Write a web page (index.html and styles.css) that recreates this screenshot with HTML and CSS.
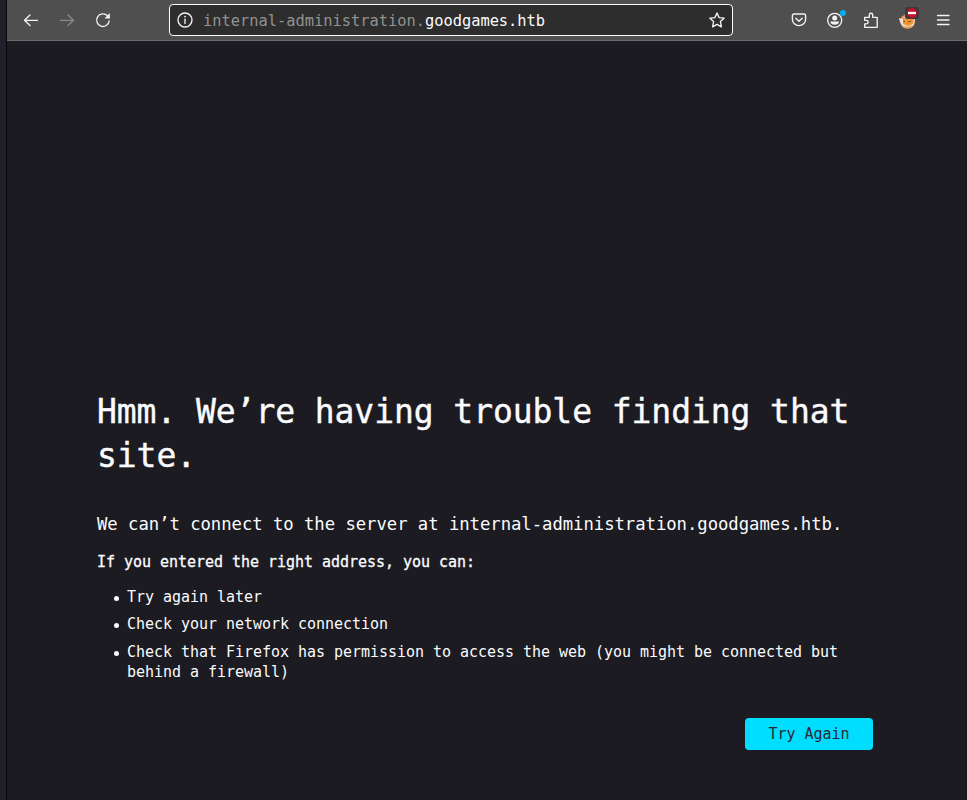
FILE: index.html
```
<!DOCTYPE html>
<html lang="en">
<head>
<meta charset="utf-8">
<title>Server Not Found</title>
<link rel="stylesheet" href="styles.css">
</head>
<body>
<div class="window">
  <header class="toolbar">
    <nav class="nav">
      <svg class="icon" viewBox="0 0 16 16"><path d="M14.500 8.300H1.800M7 3L1.500 8.300L7 13.600"/></svg>
      <svg class="icon dim" viewBox="0 0 16 16"><path d="M1.500 8.300h12.700M9 3L14.500 8.300L9 13.600"/></svg>
      <svg class="icon" viewBox="0 0 16 16"><path d="M12.300 3.600A6.300 6.300 0 1 0 14.200 9"/><path class="solid" d="M14.900 1v5.400H9.500z"/></svg>
    </nav>
    <div class="urlbar">
      <svg class="icon" viewBox="0 0 16 16"><circle cx="8" cy="8" r="7"/><path d="M8 7.200v4.400"/><circle class="solid" cx="8" cy="4.600" r=".9"/></svg>
      <div class="url">internal-administration.<span class="domain">goodgames.htb</span></div>
      <svg class="icon" viewBox="0 0 16 16"><path d="M8 1L10.100 5.600L15.100 6.200L11.400 9.600L12.400 14.800L8 12.300L3.600 14.800L4.600 9.600L.9 6.200L5.900 5.600Z"/></svg>
    </div>
    <div class="actions">
      <svg class="icon" viewBox="0 0 16 16"><path d="M3 2h10q1.600 0 1.600 1.600V7.400a6.600 6.200 0 0 1-13.200 0V3.600Q1.400 2 3 2zM4.800 6.200L8 9.300L11.200 6.200"/></svg>
      <div class="badged">
        <svg class="icon" viewBox="0 0 16 16"><circle cx="7.700" cy="8.300" r="7"/><circle class="solid" cx="7.700" cy="6" r="2.500"/><path class="solid" d="M3.300 9.500h8.800q-.6 3.200-4.400 3.200T3.300 9.500z"/></svg>
        <span class="dot"></span>
      </div>
      <svg class="icon" viewBox="0 0 16 16"><path d="M1.700 15.300h12.500V5.300H9.700V2.900a1.700 1.700 0 0 0-3.400 0V5.300H1.700V8.300h1.700a1.800 1.800 0 0 1 0 3.600H1.700z"/></svg>
      <div class="badged">
        <svg class="fox" viewBox="0 0 18 18"><circle cx="9.500" cy="9.500" r="7.300" fill="#d9a36c"/><path d="M1 6l4 1 3-3 7 2 2 2-1 5-4 3-7-1-3-5z" fill="#e9dfd4"/><path d="M5 5l3 2h5l3-1-1 6-5 2-5-2z" fill="#f39332"/><path d="M5 9l2 .7M10 10l3-1" stroke="#84512c" stroke-width="1"/><path d="M4 13q5 3 11 0l-2 3H6z" fill="#e7a35d"/></svg>
        <span class="blocked"><svg viewBox="0 0 14 12" width="14" height="12"><circle cx="7" cy="6" r="5" fill="#c90d2e"/><path d="M3 4.800h8v2.400H3z" fill="#fff"/></svg></span>
      </div>
      <svg class="icon" viewBox="0 0 16 16"><path d="M2.500 3.500h11.500M2.500 8h11.500M2.500 12.500h11.500"/></svg>
    </div>
  </header>
  <main class="page">
    <h1>Hmm. We’re having trouble finding that site.</h1>
    <p class="lead">We can’t connect to the server at internal-administration.goodgames.htb.</p>
    <p class="hint">If you entered the right address, you can:</p>
    <ul>
      <li>Try again later</li>
      <li>Check your network connection</li>
      <li>Check that Firefox has permission to access the web (you might be connected but behind a firewall)</li>
    </ul>
    <div class="buttons"><button>Try Again</button></div>
  </main>
</div>
</body>
</html>
```
FILE: styles.css
```
* { box-sizing: border-box; }
body {
  margin: 0;
  height: 800px;
  overflow: hidden;
  background: #20202b;
  color: #fbfbfe;
  font: 15px/20px "DejaVu Sans Mono", monospace;
  letter-spacing: -0.03px;
}
.window {
  height: 800px;
  margin-left: 6px;
  border-left: 1px solid #08080b;
  background: #1c1b22;
}
.toolbar {
  display: flex;
  align-items: center;
  height: 41px;
  padding: 0 16px;
  background: #4f4f4f;
  border-bottom: 1px solid #6b6b6d;
}
.nav, .actions { display: flex; align-items: center; gap: 20px; }
.nav { margin-right: 58px; }
.icon {
  display: block;
  flex: none;
  width: 16px;
  height: 16px;
  fill: none;
  stroke: #f4f4f4;
  stroke-width: 1.35;
  stroke-linecap: round;
  stroke-linejoin: round;
}
.icon .solid { fill: #f4f4f4; stroke: none; }
.dim { opacity: .35; }
.urlbar {
  display: flex;
  align-items: center;
  width: 564px;
  height: 32px;
  padding: 0 7px;
  background: #2d2d2d;
  border: 1px solid #fff;
  border-radius: 4px;
}
.url {
  flex: 1;
  padding: 1px 0 0 10px;
  color: #929292;
  font-size: 15.4px;
  letter-spacing: -0.02px;
  white-space: nowrap;
}
.domain { color: #fbfbfe; }
.actions { margin-left: auto; }
.badged { position: relative; width: 16px; height: 16px; }
.dot {
  position: absolute;
  top: -2px;
  right: -3px;
  width: 6px;
  height: 6px;
  border-radius: 50%;
  background: #00adf5;
}
.fox { display: block; width: 18px; height: 18px; margin-left: -1px; }
.blocked {
  position: absolute;
  top: -5px;
  left: 6px;
  width: 14px;
  height: 12px;
  border-radius: 2px;
  background: #3c3a3b;
}
.blocked svg { display: block; }
.page { width: 776px; margin-left: 90px; padding-top: 349px; }
h1 {
  margin: 0 0 35px;
  font-size: 33px;
  line-height: 44px;
  font-weight: 400;
  letter-spacing: -0.07px;
  -webkit-text-stroke: .4px #fbfbfe;
}
.lead {
  margin: 0 0 17px;
  font-size: 17.25px;
  line-height: 22px;
  letter-spacing: -0.035px;
}
.hint { margin: 0 0 14.5px; -webkit-text-stroke: .3px #fbfbfe; }
ul { margin: 0; padding-left: 30px; list-style: none; }
li { position: relative; margin-bottom: 7.5px; }
li::before {
  content: "";
  position: absolute;
  left: -13px;
  top: 9px;
  width: 5px;
  height: 5px;
  border-radius: 50%;
  background: #fbfbfe;
}
.buttons { display: flex; justify-content: flex-end; margin-top: 36.5px; }
button {
  width: 128px;
  height: 32px;
  padding: 0;
  border: 0;
  border-radius: 4px;
  background: #00ddff;
  color: #2b2a33;
  font: inherit;
  letter-spacing: inherit;
}
```
